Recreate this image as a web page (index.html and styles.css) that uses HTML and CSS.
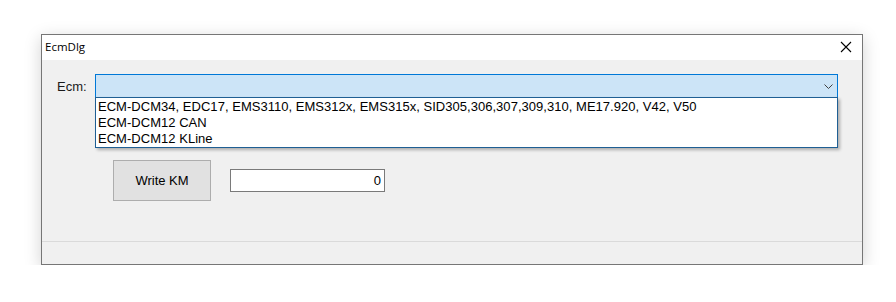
FILE: index.html
```html
<!DOCTYPE html>
<html lang="en">
<head>
    <meta charset="UTF-8" />
    <title>EcmDlg</title>
    <link rel="stylesheet" href="styles.css">
</head>
<body>
    <div class="window">
        <!-- Title bar -->
        <div class="titlebar">
            <span class="title">EcmDlg</span>
            <svg class="close" width="12" height="12" viewBox="0 0 12 12">
                <path d="M1 1 L11 11 M11 1 L1 11" stroke="#000" stroke-width="1.1" fill="none"/>
            </svg>
        </div>

        <div class="client">
            <div class="main">
                <div class="row ecm-row">
                    <label class="ecm-label">Ecm:</label>
                    <div class="combo-wrap">
                        <div class="combo">
                            <svg class="arrow" width="9" height="5" viewBox="0 0 9 5">
                                <path d="M0.5 0.5 L4.5 4.5 L8.5 0.5" stroke="#404040" stroke-width="1" fill="none"/>
                            </svg>
                        </div>
                        <!-- open dropdown list -->
                        <ul class="dropdown">
                            <li>ECM-DCM34, EDC17, EMS3110, EMS312x, EMS315x, SID305,306,307,309,310, ME17.920, V42, V50</li>
                            <li>ECM-DCM12 CAN</li>
                            <li>ECM-DCM12 KLine</li>
                        </ul>
                    </div>
                </div>

                <div class="row km-row">
                    <button class="btn">Write KM</button>
                    <input class="km-input" type="text" value="0" />
                </div>
            </div>
            <div class="footer"></div>
        </div>
    </div>
</body>
</html>
```

FILE: styles.css
```css
body {
    margin: 0;
    background: #fff;
    font-family: "Liberation Sans", Arial, sans-serif;
    font-size: 13px;
    color: #000;
}

.window {
    margin: 34px 0 0 41px;
    width: 820px;
    height: 229px;
    border: 1px solid #767676;
    background: #f0f0f0;
    box-shadow: 0 4px 16px rgba(0, 0, 0, 0.18);
    display: flex;
    flex-direction: column;
}

.titlebar {
    height: 25px;
    background: #fff;
    display: flex;
    align-items: center;
    justify-content: space-between;
    padding: 0 10px 0 3px;
}

.title {
    font-family: "Open Sans", "Noto Sans", sans-serif;
    font-size: 11.5px;
    position: relative;
    top: -1px;
}

.close {
    display: block;
    margin-top: -1px;
}

.client {
    flex: 1;
    display: flex;
    flex-direction: column;
}

.main {
    height: 181px;
    border-bottom: 1px solid #dadada;
}

.footer {
    flex: 1;
}

.row {
    display: flex;
    align-items: center;
}

.ecm-row {
    margin-top: 14px;
    padding-left: 15px;
}

.ecm-label {
    width: 38px;
    color: #1a1a1a;
}

.combo-wrap {
    position: relative;
    width: 743px;
}

.combo {
    height: 22px;
    border: 1px solid #0078d7;
    background: #cce4f7;
    display: flex;
    align-items: center;
    justify-content: flex-end;
    padding-right: 4px;
}

.arrow {
    display: block;
    margin-top: 1px;
}

.dropdown {
    position: absolute;
    top: 23px;
    left: 0;
    margin: 0;
    padding: 1px 0 0 2px;
    box-sizing: border-box;
    width: 743px;
    list-style: none;
    background: #fff;
    border: 1px solid #1f5f94;
    box-shadow: 2px 2px 3px rgba(0, 0, 0, 0.28);
}

.dropdown li {
    height: 16px;
    line-height: 16px;
    white-space: nowrap;
    letter-spacing: 0.03px;
}

.km-row {
    margin-top: 62px;
    padding-left: 71px;
}

.btn {
    width: 98px;
    height: 41px;
    border: 1px solid #adadad;
    background: #e1e1e1;
    font-family: "Liberation Sans", Arial, sans-serif;
    font-size: 13px;
    color: #000;
    padding: 0;
}

.km-input {
    margin-left: 19px;
    width: 155px;
    height: 23px;
    box-sizing: border-box;
    border: 1px solid #7a7a7a;
    background: #fff;
    text-align: right;
    padding: 0 3px;
    font-family: "Liberation Sans", Arial, sans-serif;
    font-size: 13px;
    outline: none;
}
```
